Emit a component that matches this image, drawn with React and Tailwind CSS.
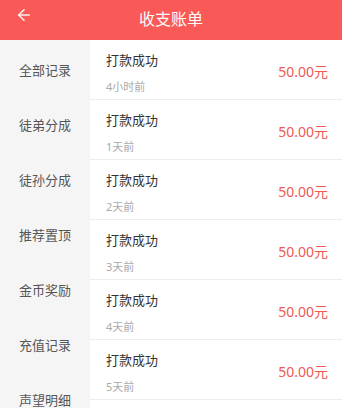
import { ArrowLeft } from 'lucide-react';

const tabs = ['全部记录', '徒弟分成', '徒孙分成', '推荐置顶', '金币奖励', '充值记录', '声望明细'];

const records = [
  { title: '打款成功', time: '4小时前', amount: '50.00元' },
  { title: '打款成功', time: '1天前', amount: '50.00元' },
  { title: '打款成功', time: '2天前', amount: '50.00元' },
  { title: '打款成功', time: '3天前', amount: '50.00元' },
  { title: '打款成功', time: '4天前', amount: '50.00元' },
  { title: '打款成功', time: '5天前', amount: '50.00元' },
];

export default function App() {
  return (
    <div
      className="w-[342px] h-[408px] overflow-hidden bg-white flex flex-col"
      style={{ fontFamily: '"Noto Sans", "Noto Sans CJK SC", sans-serif' }}
    >
      {/* Header */}
      <div className="h-[40px] shrink-0 bg-[#fa5a57] flex items-center relative">
        <ArrowLeft size={18} strokeWidth={2.2} className="absolute left-[15px] top-[6px] text-white/90" />
        <div className="flex-1 text-center text-white text-[16px] leading-none -mt-[2px]">收支账单</div>
      </div>

      <div className="flex flex-1 min-h-0">
        {/* Sidebar */}
        <div className="w-[90px] shrink-0 bg-[#f5f5f5] pt-[3px] flex flex-col">
          {tabs.map((t) => (
            <div key={t} className="h-[55px] shrink-0 flex items-center justify-center text-[13px] text-[#555]">
              {t}
            </div>
          ))}
        </div>

        {/* List */}
        <div className="flex-1 flex flex-col">
          {records.map((r, i) => (
            <div
              key={i}
              className="h-[60px] shrink-0 flex items-center pl-[16px] pr-[14px] border-b border-[#eeeeee]"
            >
              <div className="flex-1 flex flex-col pt-[6px]">
                <div className="text-[13px] leading-[18px] text-[#333]">{r.title}</div>
                <div className="text-[11px] leading-[16px] mt-[10px] text-[#aaa]">{r.time}</div>
              </div>
              <div className="text-[14px] text-[#ef5a55] pt-[4px]">{r.amount}</div>
            </div>
          ))}
        </div>
      </div>
    </div>
  );
}
